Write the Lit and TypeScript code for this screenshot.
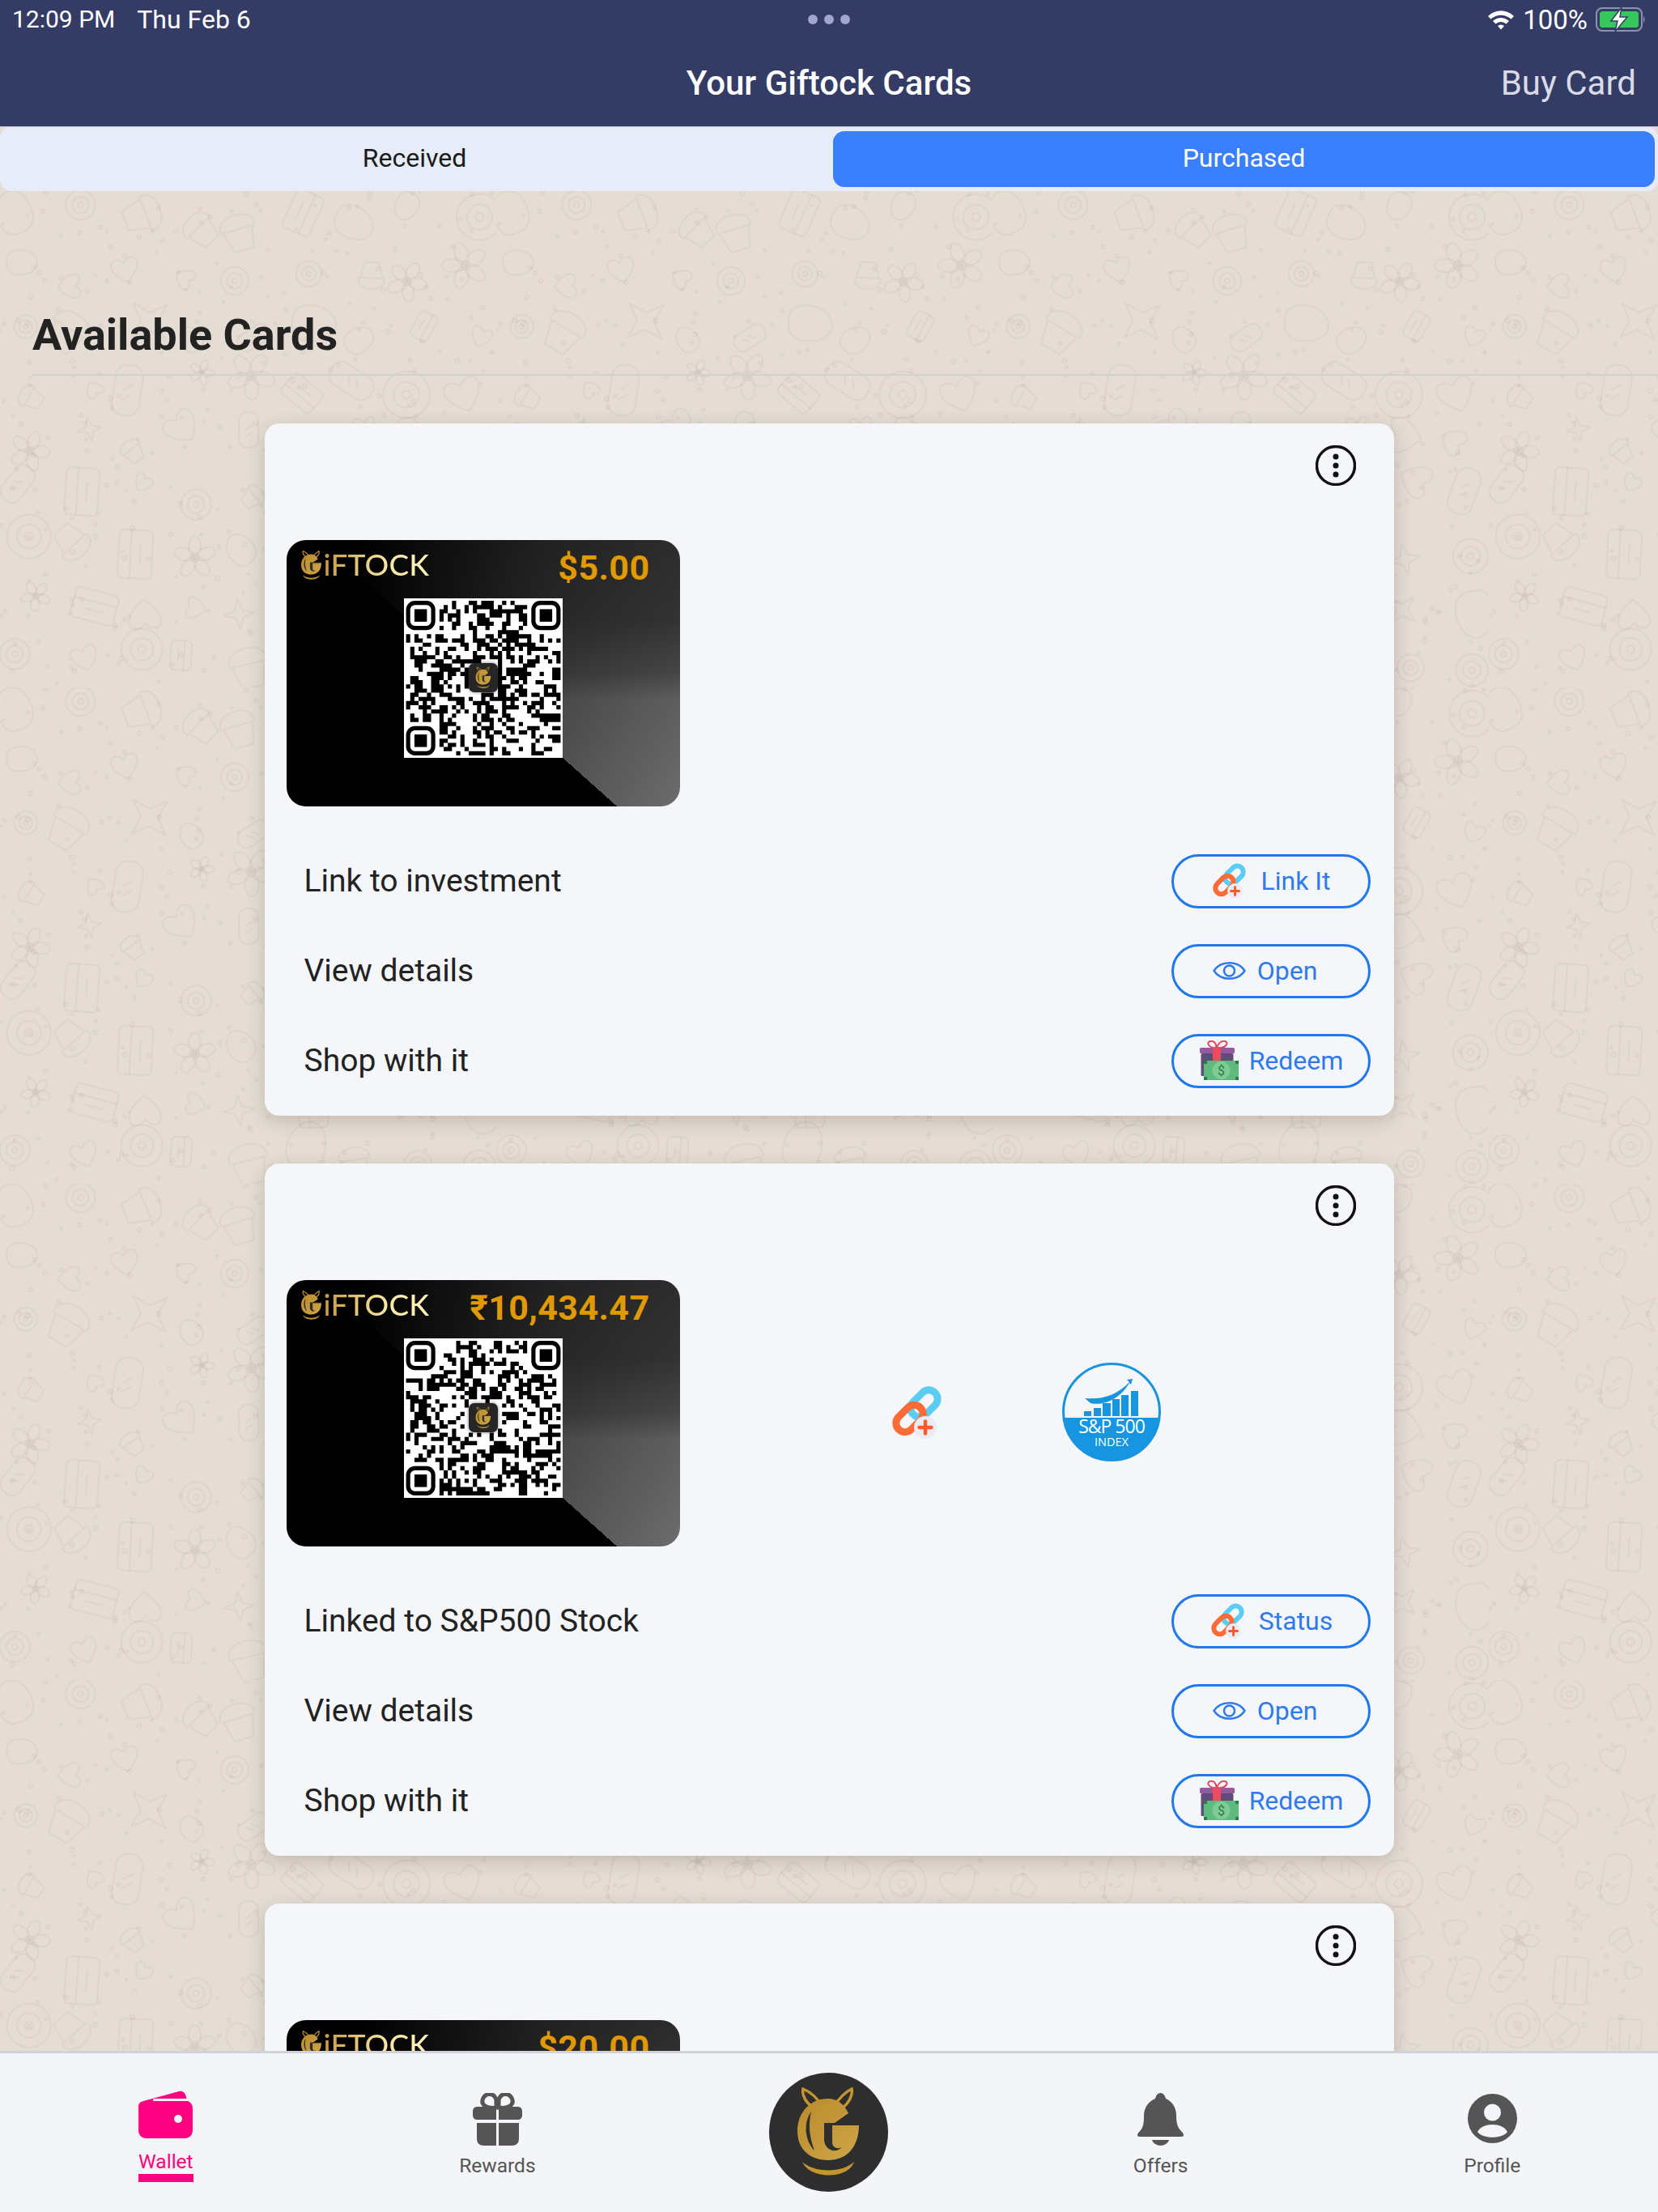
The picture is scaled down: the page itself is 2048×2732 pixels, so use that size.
import { LitElement, html, svg, css, unsafeCSS } from "lit";
import { customElement } from "lit/decorators.js";

function rng(seed: number) {
  let s = seed;
  return () => {
    s = (s * 1664525 + 1013904223) >>> 0;
    return ((s >>> 8) & 0xffff) / 65536;
  };
}

function doodleTile(): string {
  const r = rng(77);
  const size = 613;
  const cells = 9;
  const step = size / cells;
  let out = "";
  const kinds = [
    (s: number) => `<circle r="${s}"/><circle r="${s * 0.55}"/><circle r="${s * 0.18}"/>`,
    (s: number) =>
      [0, 72, 144, 216, 288].map((a) => `<ellipse rx="${s * 0.3}" ry="${s * 0.5}" cy="${-s * 0.55}" transform="rotate(${a})"/>`).join("") + `<circle r="${s * 0.2}"/>`,
    (s: number) => `<rect x="${-s * 1.3}" y="${-s * 0.7}" width="${s * 2.6}" height="${s * 1.4}" rx="${s * 0.6}"/><path d="M${-s * 0.5} ${-s * 0.2}l${s * 0.3} ${s * 0.4}M0 ${-s * 0.2}l${s * 0.3} ${s * 0.4}"/>`,
    (s: number) => `<path d="M${-s * 0.7} 0L${-s * 0.45} ${s}H${s * 0.45}L${s * 0.7} 0ZM${-s * 0.8} 0C${-s} ${-s * 0.9} ${s} ${-s * 0.9} ${s * 0.8} 0"/>`,
    (s: number) => `<path d="M0 ${-s}L${s * 0.25} ${-s * 0.25}L${s} 0L${s * 0.25} ${s * 0.25}L0 ${s}L${-s * 0.25} ${s * 0.25}L${-s} 0L${-s * 0.25} ${-s * 0.25}Z"/>`,
    (s: number) => `<path d="M${-s} ${-s * 0.3}C${-s} ${-s} ${s * 0.6} ${-s * 1.2} ${s} ${-s * 0.3}C${s * 1.3} ${s * 0.6} ${-s * 0.2} ${s} ${-s * 0.7} ${s * 0.6}C${-s} ${s * 0.4} ${-s} 0 ${-s} ${-s * 0.3}Z"/>`,
    (s: number) => `<rect x="${-s}" y="${-s * 0.7}" width="${s * 2}" height="${s * 1.4}" rx="6"/><path d="M${-s} ${-s * 0.2}H${s}M${-s * 0.4} ${s * 0.2}H${s * 0.4}"/>`,
    (s: number) => `<path d="M0 ${s * 0.8}C${-s * 1.4} ${-s * 0.2} ${-s * 0.5} ${-s} 0 ${-s * 0.3}C${s * 0.5} ${-s} ${s * 1.4} ${-s * 0.2} 0 ${s * 0.8}Z"/>`,
  ];
  for (let y = 0; y < cells; y++) {
    for (let x = 0; x < cells; x++) {
      const cx = x * step + step / 2 + (r() - 0.5) * 34;
      const cy = y * step + step / 2 + (r() - 0.5) * 34;
      const s = 14 + r() * 16;
      const k = kinds[Math.floor(r() * kinds.length)];
      out += `<g transform="translate(${cx.toFixed(1)} ${cy.toFixed(1)}) rotate(${Math.floor(r() * 360)})">${k(s)}</g>`;
      for (let i = 0; i < 4; i++) {
        const dx = x * step + r() * step;
        const dy = y * step + r() * step;
        out += `<circle cx="${dx.toFixed(1)}" cy="${dy.toFixed(1)}" r="${(1.2 + r() * 1.4).toFixed(1)}"/>`;
      }
    }
  }
  const tile = `<svg xmlns="http://www.w3.org/2000/svg" width="${size}" height="${size}"><g fill="none" stroke="#8c7864" stroke-opacity=".085" stroke-width="2.2" stroke-linejoin="round" stroke-linecap="round">${out}</g></svg>`;
  return `url("data:image/svg+xml,${encodeURIComponent(tile)}")`;
}

function qrPath(seed: number): string {
  const n = 37;
  const r = rng(seed);
  const grid: boolean[][] = [];
  let d = "";
  const inFinder = (x: number, y: number) =>
    (x < 8 && y < 8) || (x >= n - 8 && y < 8) || (x < 8 && y >= n - 8);
  for (let y = 0; y < n; y++) {
    grid[y] = [];
    for (let x = 0; x < n; x++) {
      const left = x > 0 && grid[y][x - 1];
      const up = y > 0 && grid[y - 1][x];
      const p = 0.36 + (left ? 0.13 : 0) + (up ? 0.13 : 0) - (left && up ? 0.1 : 0);
      const on = r() < p;
      grid[y][x] = on;
      if (inFinder(x, y)) continue;
      if (x >= 15 && x <= 21 && y >= 15 && y <= 21) continue;
      if (on) d += `M${x} ${y}h1v1h-1z`;
    }
  }
  return d;
}

function gMark(box = "0 0 147 147") {
  return html`<svg class="fill" viewBox="${box}">
    <defs>
      <linearGradient id="gold" x1="0" y1="0" x2="1" y2="1">
        <stop offset="0" stop-color="#b98a2a" />
        <stop offset="1" stop-color="#cfa64a" />
      </linearGradient>
    </defs>
    <path d="M66 42C60 32 52 24 42 20C40 28 46 38 56 44M80 42C86 32 94 24 102 20C104 28 98 38 90 44" fill="none" stroke="#c4962f" stroke-width="3.500" />
    <path d="M73 32C50 32 35 50 35 72C35 94 50 108 73 108C96 108 111 92 111 64H78L98 50C92 38 84 32 73 32Z" fill="url(#gold)" />
    <path d="M52 48C42 62 44 84 56 96C50 80 48 64 52 48Z" fill="#2e2e2e" />
    <path d="M68 62H111V65H78V86C78 92 84 95 90 92C82 100 70 96 68 84Z" fill="#2e2e2e" />
    <path d="M41 110C56 124 90 124 105 110C98 132 50 132 41 110Z" fill="#c4962f" />
  </svg>`;
}

function linkIcon() {
  return html`<svg class="fill" viewBox="0 0 61 65">
    <rect x="20.500" y="10.500" width="38" height="22" rx="11" transform="rotate(-45 39.500 21.500)" fill="none" stroke="#5bcdf5" stroke-width="9" />
    <rect x="2.500" y="29" width="38" height="22" rx="11" transform="rotate(-45 21.500 40)" fill="none" stroke="#ff6b35" stroke-width="9" />
    <circle cx="41" cy="51" r="14" fill="#e9ecf5" />
    <path d="M41 43.500V58.500M33.500 51H48.500" stroke="#ff5a2a" stroke-width="4.500" stroke-linecap="round" />
  </svg>`;
}

function eyeIcon() {
  return html`<svg class="fill" viewBox="0 0 41 28">
    <path d="M1.500 14C10 1 31 1 39.500 14C31 27 10 27 1.500 14Z" fill="none" stroke="#2f7af0" stroke-width="2.500" />
    <circle cx="20.500" cy="14" r="6.500" fill="none" stroke="#2f7af0" stroke-width="2.500" />
  </svg>`;
}

function giftIcon() {
  return html`<svg class="fill" viewBox="0 0 50 50">
    <path d="M21 9C12 9 10 2 15 1C20 0 23 5 22 9M23 9C24 5 28 0 33 1C38 2 35 9 27 9" fill="none" stroke="#e0475c" stroke-width="2" />
    <rect x="2" y="9" width="43" height="7" rx="1.500" fill="#96589f" />
    <rect x="3.500" y="16" width="40" height="28" rx="1.500" fill="#5e4d78" />
    <rect x="18" y="8" width="10" height="18" fill="#ef4a5e" />
    <rect x="7" y="25" width="43" height="24" fill="#5fba7d" />
    <rect x="7" y="25" width="4" height="4" fill="#2f7a4a" /><rect x="46" y="25" width="4" height="4" fill="#2f7a4a" />
    <rect x="7" y="45" width="4" height="4" fill="#2f7a4a" /><rect x="46" y="45" width="4" height="4" fill="#2f7a4a" />
    <circle cx="28.500" cy="37" r="11" fill="#7ecb95" />
    <text x="28.500" y="43" text-anchor="middle" font-family="Roboto" font-size="16" fill="#2f7a4a">$</text>
  </svg>`;
}

function spIcon() {
  return html`<svg class="fill" viewBox="0 0 122 122">
    <circle cx="61" cy="61" r="59.500" fill="none" stroke="#1795e0" stroke-width="3" />
    <path d="M2.500 68H119.500C116 99 91 121 61 121C31 121 6 99 2.500 68Z" fill="#1795e0" />
    <g fill="#1795e0">
      <rect x="27" y="60" width="9" height="6" />
      <rect x="39" y="56" width="9" height="10" />
      <rect x="50" y="50" width="10" height="16" />
      <rect x="62" y="45" width="9" height="21" />
      <rect x="73" y="40" width="9" height="26" />
      <rect x="85" y="35" width="9" height="31" />
      <path d="M28 44C50 46 68 40 83 24L80 21L87 20L85 27L83 25C72 44 52 54 35 50Z" />
    </g>
    <text x="61" y="87" text-anchor="middle" font-family="Open Sans" font-size="23" letter-spacing="-1" fill="#fff">S&amp;P 500</text>
    <text x="61" y="103" text-anchor="middle" font-family="Open Sans" font-size="14.500" fill="#fff">INDEX</text>
  </svg>`;
}

const TILE = unsafeCSS(doodleTile());

@customElement("gift-card")
class GiftCard extends LitElement {
  static properties = { price: {}, seed: { type: Number } };
  price = "";
  seed = 1;
  static styles = css`
    :host {
      display: block;
      flex: none;
      width: 486px;
      height: 329px;
    }
    .fill {
      display: block;
      width: 100%;
      height: 100%;
    }
    .face {
      position: relative;
      width: 100%;
      height: 100%;
      box-sizing: border-box;
      border-radius: 24px;
      overflow: hidden;
      background: linear-gradient(41.8deg, #000 47.8%, transparent 47.8%),
        linear-gradient(to right, #000 0%, #000 18%, rgba(0, 0, 0, 0.62) 42%, rgba(0, 0, 0, 0.25) 66%, rgba(0, 0, 0, 0) 100%),
        linear-gradient(to bottom, #2c2c2c 0%, #333 30%, #464646 50%, #5e5e5e 60%, #6c6c6c 100%);
    }
    .top {
      display: flex;
      align-items: flex-start;
      justify-content: space-between;
      padding: 12px 37px 0 17px;
      height: 56px;
      box-sizing: border-box;
    }
    .brand {
      display: flex;
      align-items: center;
    }
    .mark {
      width: 27px;
      height: 40px;
      margin-right: 2px;
    }
    .word {
      font: 500 37px/1 Lato, sans-serif;
      letter-spacing: 0.2px;
      margin-top: -5px;
      background: linear-gradient(90deg, #c89a42, #f8e7a6 60%, #fff2b8);
      -webkit-background-clip: text;
      background-clip: text;
      color: transparent;
    }
    .price {
      font: 700 43px/1 Roboto, sans-serif;
      color: #e09a00;
      letter-spacing: 0.4px;
      margin-top: 1px;
    }
    .qr {
      position: absolute;
      left: 145px;
      top: 72px;
      width: 196px;
      height: 197px;
      background: #fff;
    }
    .tile {
      position: absolute;
      left: 80px;
      top: 80px;
      width: 36px;
      height: 36px;
      border-radius: 7px;
      background: #262626;
      box-shadow: 0 0 4px rgba(0, 0, 0, 0.5);
    }
  `;
  render() {
    const finder = (x: number, y: number) => svg`
      <rect x="${x + 0.5}" y="${y + 0.5}" width="6" height="6" rx="1.600" fill="none" stroke="#000" stroke-width="1" />
      <rect x="${x + 2}" y="${y + 2}" width="3" height="3" fill="#000" />
    `;
    return html`<div class="face">
      <div class="top">
        <div class="brand">
          <div class="mark">${gMark("32 16 82 120")}</div>
          <span class="word">iFTOCK</span>
        </div>
        <span class="price">${this.price}</span>
      </div>
      <div class="qr">
        <svg class="fill" viewBox="-0.500 -0.500 38 38">
          <path d="${qrPath(this.seed)}" fill="#000" />
          ${finder(0, 0)} ${finder(30, 0)} ${finder(0, 30)}
        </svg>
        <div class="tile">${gMark()}</div>
      </div>
    </div>`;
  }
}

@customElement("card-panel")
class CardPanel extends LitElement {
  static properties = {
    price: {},
    seed: { type: Number },
    linked: { type: Boolean },
  };
  price = "";
  seed = 1;
  linked = false;
  static styles = css`
    :host {
      display: block;
      flex: none;
      width: 1395px;
      background: #f4f6f9;
      border-radius: 18px;
      box-shadow: 0 6px 22px rgba(70, 55, 40, 0.22);
    }
    .fill {
      display: block;
      width: 100%;
      height: 100%;
    }
    .menu-row {
      height: 144px;
      box-sizing: border-box;
      padding: 27px 47px 0 0;
      display: flex;
      justify-content: flex-end;
    }
    .kebab {
      width: 50px;
      height: 50px;
    }
    .visual {
      display: flex;
      align-items: center;
      padding-left: 27px;
    }
    .chain {
      width: 61px;
      height: 65px;
      margin: 0 0 3px 262px;
    }
    .sp {
      width: 122px;
      height: 122px;
      margin: 0 0 3px 149px;
    }
    .rows {
      display: flex;
      flex-direction: column;
      gap: 44px;
      padding: 59px 29px 34px 49px;
    }
    .row {
      display: flex;
      align-items: center;
      justify-content: space-between;
      height: 67px;
      font: 400 39px/1 Roboto, sans-serif;
      color: #222;
    }
    .btn {
      width: 246px;
      height: 67px;
      box-sizing: border-box;
      border: 3px solid #1e78f0;
      border-radius: 34px;
      padding-bottom: 2px;
      display: flex;
      align-items: center;
      justify-content: center;
      font: 400 32px/1 Roboto, sans-serif;
      color: #2f7af0;
    }
    .i-link {
      width: 41px;
      height: 44px;
      margin: 0 18px 0 3px;
    }
    .i-eye {
      width: 41px;
      height: 28px;
      margin: 0 14px 0 -14px;
    }
    .i-gift {
      width: 50px;
      height: 50px;
      margin-right: 13px;
    }
  `;
  render() {
    return html`
      <div class="menu-row">
        <svg class="kebab" viewBox="0 0 50 50">
          <circle cx="25" cy="25" r="23.500" fill="none" stroke="#111" stroke-width="3.500" />
          <circle cx="25" cy="14" r="3.500" fill="#111" />
          <circle cx="25" cy="25" r="3.500" fill="#111" />
          <circle cx="25" cy="36" r="3.500" fill="#111" />
        </svg>
      </div>
      <div class="visual">
        <gift-card .price=${this.price} .seed=${this.seed}></gift-card>
        ${this.linked
          ? html`<div class="chain">${linkIcon()}</div>
              <div class="sp">${spIcon()}</div>`
          : ""}
      </div>
      <div class="rows">
        <div class="row">
          <span>${this.linked ? "Linked to S&P500 Stock" : "Link to investment"}</span>
          <div class="btn"><div class="i-link">${linkIcon()}</div>${this.linked ? "Status" : "Link It"}</div>
        </div>
        <div class="row">
          <span>View details</span>
          <div class="btn"><div class="i-eye">${eyeIcon()}</div>Open</div>
        </div>
        <div class="row">
          <span>Shop with it</span>
          <div class="btn"><div class="i-gift">${giftIcon()}</div>Redeem</div>
        </div>
      </div>
    `;
  }
}

@customElement("app-root")
class AppRoot extends LitElement {
  static styles = css`
    :host {
      display: flex;
      flex-direction: column;
      width: 2048px;
      height: 2732px;
      overflow: hidden;
      font-family: Roboto, sans-serif;
      background: #e5ddd5;
    }
    .fill {
      display: block;
      width: 100%;
      height: 100%;
    }
    .header {
      flex: none;
      height: 157px;
      background: #343c66;
      color: #fff;
      box-sizing: border-box;
      border-bottom: 1px solid #c9ccd8;
    }
    .status {
      height: 48px;
      display: grid;
      grid-template-columns: 1fr auto 1fr;
      align-items: center;
      padding: 0 15px;
      font: 400 30px/1 Roboto, sans-serif;
    }
    .time {
      display: flex;
      align-items: center;
      gap: 27px;
    }
    .date {
      font-size: 32px;
    }
    .pct {
      font-size: 33px;
    }
    .dots {
      display: flex;
      gap: 8px;
    }
    .dots i {
      width: 12px;
      height: 12px;
      border-radius: 50%;
      background: #a0a6d0;
    }
    .sys {
      display: flex;
      align-items: center;
      justify-content: flex-end;
      gap: 10px;
    }
    .wifi {
      width: 34px;
      height: 26px;
    }
    .batt {
      width: 62px;
      height: 32px;
    }
    .nav {
      height: 108px;
      box-sizing: border-box;
      display: grid;
      grid-template-columns: 1fr auto 1fr;
      align-items: center;
      padding: 2px 27px 0;
    }
    .title {
      font: 500 42px/1 Roboto, sans-serif;
    }
    .buy {
      justify-self: end;
      font: 400 42px/1 Roboto, sans-serif;
      color: #d9dbe6;
    }
    .tabs {
      flex: none;
      height: 79px;
      box-sizing: border-box;
      background: #e6ecf8;
      border-radius: 14px;
      display: grid;
      grid-template-columns: 1024px 1fr;
      padding: 5px 4px 5px 0;
      font: 400 32px/1 Roboto, sans-serif;
    }
    .tab {
      display: flex;
      align-items: center;
      justify-content: center;
      padding-bottom: 3px;
      color: #1a1a1a;
    }
    .tab.on {
      margin-left: 5px;
      background: #3a7fff;
      color: #fff;
      border-radius: 14px;
    }
    .main {
      flex: 1;
      min-height: 0;
      overflow: hidden;
      background-color: #e5ddd4;
      background-image: ${TILE};
      padding-top: 147px;
      display: flex;
      flex-direction: column;
      align-items: center;
    }
    .heading {
      align-self: stretch;
      margin-left: 40px;
      padding-bottom: 19px;
      border-bottom: 2px solid #cfcfd4;
      font: 700 54px/62px Roboto, sans-serif;
      height: 60px;
      color: #222;
    }
    .cards {
      display: flex;
      flex-direction: column;
      gap: 59px;
      margin-top: 59px;
    }
    .footer {
      flex: none;
      height: 199px;
      box-sizing: border-box;
      border-top: 3px solid #d0d2d8;
      background: #f4f5f8;
      display: grid;
      grid-template-columns: repeat(5, 1fr);
    }
    .item {
      display: flex;
      flex-direction: column;
      align-items: center;
      padding-top: 49px;
      font: 400 24.5px/30px Roboto, sans-serif;
      color: #555;
    }
    .item .ic {
      width: 61px;
      height: 65px;
      margin-bottom: 10px;
    }
    .item.wallet {
      padding-top: 46px;
      color: #ff0080;
    }
    .item.wallet .ic {
      width: 67px;
      height: 59px;
      margin-bottom: 14px;
    }
    .item.wallet span {
      width: 68px;
      text-align: center;
      border-bottom: 10px solid #ff0080;
    }
    .item.bell .ic {
      width: 57px;
    }
    .item.center {
      padding-top: 24px;
    }
    .logo {
      width: 147px;
      height: 147px;
      border-radius: 50%;
      background: #2e2e2e;
    }
  `;
  render() {
    return html`
      <div class="header">
        <div class="status">
          <div class="time"><span>12:09 PM</span><span class="date">Thu Feb 6</span></div>
          <div class="dots"><i></i><i></i><i></i></div>
          <div class="sys">
            <svg class="wifi" viewBox="0 0 34 26">
              <path d="M1 9C10 0 24 0 33 9L29.500 12.500C22 6 12 6 4.500 12.500Z" fill="#fff" />
              <path d="M7 15C13 9.500 21 9.500 27 15L23.500 18.500C19.500 15 14.500 15 10.500 18.500Z" fill="#fff" />
              <path d="M13 21C15.500 19 18.500 19 21 21L17 25.500Z" fill="#fff" />
            </svg>
            <span class="pct">100%</span>
            <svg class="batt" viewBox="0 0 62 32">
              <rect x="1" y="2" width="56" height="28" rx="7" fill="none" stroke="#8d92ad" stroke-width="2" />
              <rect x="5" y="6" width="48" height="20" rx="3.500" fill="#34c759" />
              <path d="M59 12C61 13 61 19 59 20Z" fill="#8d92ad" />
              <path d="M32 1L19 18H27L24 31L39 13H30Z" fill="#fff" stroke="#343c66" stroke-width="1.500" />
            </svg>
          </div>
        </div>
        <div class="nav">
          <span></span>
          <span class="title">Your Giftock Cards</span>
          <span class="buy">Buy Card</span>
        </div>
      </div>
      <div class="tabs">
        <div class="tab">Received</div>
        <div class="tab on">Purchased</div>
      </div>
      <div class="main">
        <div class="heading">Available Cards</div>
        <div class="cards">
          <card-panel price="$5.00" seed="11"></card-panel>
          <card-panel price="₹10,434.47" seed="29" linked></card-panel>
          <card-panel price="$20.00" seed="53"></card-panel>
        </div>
      </div>
      <div class="footer">
        <div class="item wallet">
          <div class="ic">
            <svg class="fill" viewBox="0 0 67 59">
              <path d="M6 13L50 1C55 0 58 3 59 8L60 12H58C63 13 67 16 67 22V49C67 55 63 59 57 59H10C4 59 0 55 0 49V20C0 16 2 14 6 13Z" fill="#ff0080" />
              <rect x="18" y="10" width="43" height="3" rx="1.500" fill="#f4f5f8" />
              <circle cx="49" cy="35" r="5" fill="#f4f5f8" />
            </svg>
          </div>
          <span>Wallet</span>
        </div>
        <div class="item">
          <div class="ic">
            <svg class="fill" viewBox="0 0 61 65">
              <path d="M29 18C16 20 9 14 13 6C17 -1 27 0 29 9ZM32 18C45 20 52 14 48 6C44 -1 34 0 32 9Z" fill="none" stroke="#555" stroke-width="5" />
              <path d="M6 17H29V33H6C2 33 0 31 0 27V23C0 19 2 17 6 17ZM32 17H55C59 17 61 19 61 23V27C61 31 59 33 55 33H32Z" fill="#555" />
              <path d="M5 37H29V65H14C8 65 5 62 5 56ZM32 37H57V56C57 62 54 65 48 65H32Z" fill="#555" />
            </svg>
          </div>
          <span>Rewards</span>
        </div>
        <div class="item center">
          <div class="logo">${gMark()}</div>
        </div>
        <div class="item bell">
          <div class="ic">
            <svg class="fill" viewBox="0 0 57 65">
              <path d="M28.500 0C32 0 34 3 35 7C42 10 48 17 48 28C48 38 50 42 53 46C55 48 57 50 57 52C57 54 55 54 52 54H5C2 54 0 54 0 52C0 50 2 48 4 46C7 42 8 38 8 28C8 17 15 10 22 7C23 3 25 0 28.500 0Z" fill="#555" />
              <path d="M18 58H39C38 62 33 65 28.500 65C24 65 19 62 18 58Z" fill="#555" />
            </svg>
          </div>
          <span>Offers</span>
        </div>
        <div class="item">
          <div class="ic">
            <svg class="fill" viewBox="0 0 61 65">
              <circle cx="30.500" cy="31.500" r="30.500" fill="#555" />
              <circle cx="30.500" cy="24" r="10.500" fill="#f4f5f8" />
              <path d="M12 48C18 36 43 36 49 48C43 57 18 57 12 48Z" fill="#f4f5f8" />
            </svg>
          </div>
          <span>Profile</span>
        </div>
      </div>
    `;
  }
}
